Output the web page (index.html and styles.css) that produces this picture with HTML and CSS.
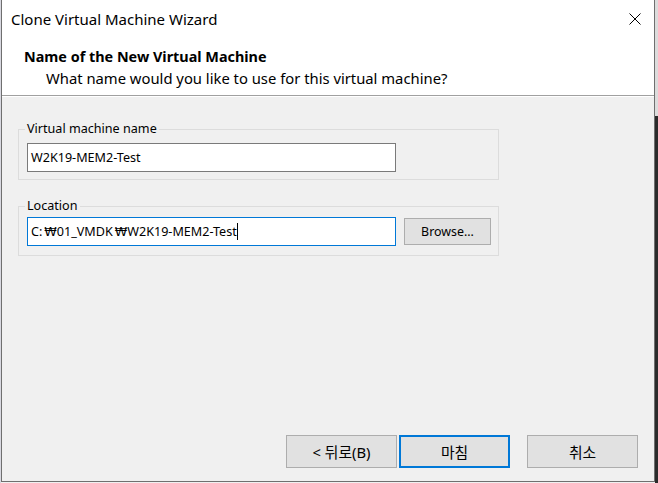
FILE: index.html
```html
<!DOCTYPE html>
<html>
<head>
<meta charset="utf-8">
<link rel="stylesheet" href="styles.css">
</head>
<body>
<div class="screen">
  <div class="desk-left"></div>
  <div class="window">
    <div class="header">
      <div class="titlebar">
        <span class="title">Clone Virtual Machine Wizard</span>
        <svg class="close" width="12" height="12" viewBox="0 0 12 12"><path d="M0.5 0.5 L11.5 11.5 M11.5 0.5 L0.5 11.5" stroke="#000" stroke-width="1" fill="none"/></svg>
      </div>
      <div class="heading">Name of the New Virtual Machine</div>
      <div class="subheading">What name would you like to use for this virtual machine?</div>
    </div>
    <div class="body">
      <div class="group group-name">
        <span class="legend">Virtual machine name</span>
        <div class="row">
          <div class="input">W2K19-MEM2-Test</div>
        </div>
      </div>
      <div class="group group-loc">
        <span class="legend">Location</span>
        <div class="row">
          <div class="input focused">C:<span class="won">₩</span>01_VMDK<span class="won">₩</span>W2K19-MEM2-Test<span class="caret"></span></div>
          <div class="btn browse">Browse...</div>
        </div>
      </div>
      <div class="spacer"></div>
      <div class="footer">
        <div class="btn wbtn">&lt; 뒤로(B)</div>
        <div class="btn wbtn default">마침</div>
        <div class="btn wbtn cancel">취소</div>
      </div>
    </div>
  </div>
  <div class="desk-right"></div>
</div>
</body>
</html>
```
FILE: styles.css
```css
* { box-sizing: border-box; }
html, body { margin: 0; padding: 0; }
body {
  width: 658px;
  height: 483px;
  overflow: hidden;
  background: #f0f0f0;
  font-family: "Noto Sans", "Noto Sans CJK KR", sans-serif;
  color: #000;
}
.screen {
  display: flex;
  height: 483px;
}
.desk-left {
  width: 1px;
  background: #d8d8e0;
}
.desk-right {
  width: 3px;
  background: linear-gradient(#dcdcdc 0, #dcdcdc 116px, #2b2b2b 116px);
}
.window {
  width: 654px;
  height: 482px;
  border-left: 1px solid #6f6f6f;
  border-right: 1px solid #6f6f6f;
  border-bottom: 1px solid #6f6f6f;
  display: flex;
  flex-direction: column;
  background: #f0f0f0;
}
.header {
  background: #fff;
  height: 96px;
  border-bottom: 1px solid #a0a0a0;
  box-shadow: 0 1px 0 #fff;
  padding-left: 9px;
}
.titlebar {
  display: flex;
  align-items: center;
  justify-content: space-between;
  height: 37px;
  padding-right: 13px;
}
.title {
  font-size: 15px;
  color: #000;
  padding-top: 1px;
}
.heading {
  font-weight: bold;
  font-size: 14.4px;
  padding-left: 13px;
  margin-top: 11px;
  line-height: 18px;
}
.subheading {
  font-size: 14.8px;
  padding-left: 35px;
  line-height: 20px;
  margin-top: 2px;
}
.body {
  flex: 1;
  display: flex;
  flex-direction: column;
  padding: 0 0 0 16px;
}
.group {
  width: 481px;
  border: 1px solid #dcdcdc;
  padding: 0 0 0 8px;
  position: relative;
}
.group-name {
  margin-top: 33px;
  height: 51px;
  padding-top: 13px;
}
.group-loc {
  margin-top: 26px;
  height: 50px;
  padding-top: 10px;
}
.legend {
  position: absolute;
  left: 6px;
  top: -10px;
  background: #f0f0f0;
  padding: 0 2px;
  font-size: 12.6px;
  line-height: 18px;
}
.row {
  display: flex;
  align-items: center;
}
.input {
  width: 369px;
  height: 29px;
  background: #fff;
  border: 1px solid #7a7a7a;
  font-size: 12.6px;
  padding-left: 3px;
  display: flex;
  align-items: center;
}
.won {
  font-family: "DejaVu Sans", sans-serif;
  font-size: 12.6px;
  padding: 0 0 0 2px;
}
.focused { border-color: #0078d7; }
.caret {
  display: inline-block;
  width: 1px;
  height: 17px;
  background: #000;
}
.btn {
  background: #e1e1e1;
  border: 1px solid #adadad;
  display: flex;
  align-items: center;
  justify-content: center;
  font-size: 12.4px;
}
.browse {
  width: 87px;
  height: 27px;
  margin-left: 8px;
}
.spacer { flex: 1; }
.footer {
  display: flex;
  padding-left: 268px;
  margin-bottom: 13px;
}
.wbtn {
  width: 111px;
  height: 33px;
  font-size: 14.8px;
}
.default {
  border: 2px solid #0078d7;
  margin-left: 2px;
}
.cancel { margin-left: 17px; }
```
